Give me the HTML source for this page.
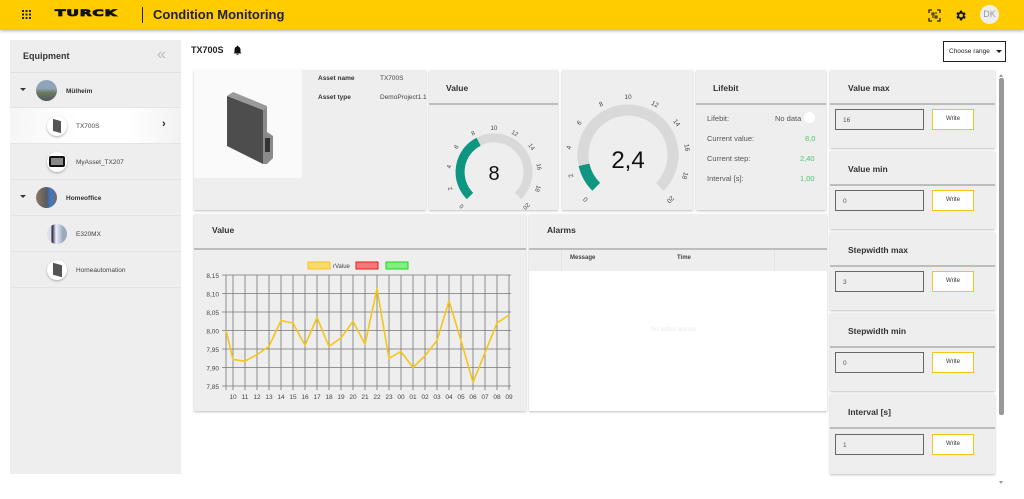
<!DOCTYPE html>
<html><head><meta charset="utf-8"><style>
*{margin:0;padding:0;box-sizing:border-box}
body{width:1024px;height:499px;overflow:hidden;background:#fff;font-family:"Liberation Sans",sans-serif;color:#222;position:relative}
.a{position:absolute}
.card{position:absolute;background:#eeeeee;box-shadow:0 1px 2px rgba(0,0,0,.25)}
.hd{position:absolute;left:0;right:0;top:0;border-bottom:2px solid #bdbdbd}
.t{position:absolute;font-size:8.5px;font-weight:bold;color:#333}
.s{position:absolute;font-size:6.5px;color:#444}
.lb{position:absolute;font-size:7.5px;color:#555}
.inp{position:absolute;border:1px solid #666;background:#eee;font-size:6.5px;color:#555;padding:7px 0 0 7px}
.btn{position:absolute;border:1.5px solid #f5c518;background:#fff;font-size:6px;color:#333;text-align:center;line-height:18px}
.row{position:absolute;left:0;width:171px;height:36px;border-bottom:1px solid #e4e4e4}
.av{position:absolute;width:20px;height:20px;border-radius:50%;top:8px}
.lbl{position:absolute;top:15px;font-size:6.5px;color:#444}
</style></head><body>
<div class="a" style="left:0;top:0;width:1024px;height:30px;background:#ffcc00;box-shadow:0 1px 3px rgba(0,0,0,.3)"></div>
<svg class="a" style="left:22px;top:10px" width="10" height="10"><g fill="#222"><rect x="0" y="0" width="2" height="2"/><rect x="3.5" y="0" width="2" height="2"/><rect x="7" y="0" width="2" height="2"/><rect x="0" y="3.5" width="2" height="2"/><rect x="3.5" y="3.5" width="2" height="2"/><rect x="7" y="3.5" width="2" height="2"/><rect x="0" y="7" width="2" height="2"/><rect x="3.5" y="7" width="2" height="2"/><rect x="7" y="7" width="2" height="2"/></g></svg>
<div class="a" style="left:55px;top:9px;font-size:10px;font-weight:900;letter-spacing:0.5px;color:#111;transform:scale(1.55,0.9);transform-origin:left top;font-family:'DejaVu Sans',sans-serif;-webkit-text-stroke:0.8px #111">TURCK</div>
<div class="a" style="left:142px;top:7px;width:1px;height:16px;background:#222"></div>
<div class="a" style="left:153px;top:7px;font-size:13px;font-weight:bold;color:#222">Condition Monitoring</div>
<svg class="a" style="left:928px;top:9px" width="13" height="13" fill="none" stroke="#222" stroke-width="1.3"><path d="M1 4V1h3M9 1h3v3M12 9v3H9M4 12H1V9"/><path d="M4 4h2v2H4zM7 7h2v2H7zM7 4h2M4 8h2" stroke-width="1"/></svg>
<svg class="a" style="left:954px;top:9px" width="13" height="13" viewBox="0 0 24 24"><path fill="#111" d="M19.4 13a7.5 7.5 0 000-2l2.1-1.6-2-3.5-2.5 1a7 7 0 00-1.7-1L15 3h-4l-.4 2.7a7 7 0 00-1.700 1l-2.5-1-2 3.5L6.5 11a7.5 7.5 0 000 2l-2.1 1.6 2 3.5 2.5-1c.5.4 1.1.8 1.7 1L11 21h4l.4-2.7c.6-.3 1.2-.6 1.7-1l2.5 1 2-3.5zM13 15.5a3.5 3.5 0 110-7 3.5 3.5 0 010 7z"/></svg>
<div class="a" style="left:980px;top:5px;width:19px;height:19px;border-radius:50%;background:#eee;font-size:9px;color:#999;text-align:center;line-height:19px">DK</div>

<div class="a" style="left:10px;top:40px;width:171px;height:434px;background:#eeeeee">
 <div class="a" style="left:13px;top:11px;font-size:9px;font-weight:bold;color:#333">Equipment</div>
 <div class="a" style="left:147px;top:6px;font-size:16px;color:#bbb">«</div>
 <div class="row" style="top:32px;border-top:1px solid #e0e0e0"><div class="a" style="left:10px;top:15px;border:3px solid transparent;border-top:3.5px solid #333"></div><div class="av" style="left:26px;top:7px;width:21px;height:21px;background:linear-gradient(#8fa4b8 40%,#6a7a5a 60%,#556)"></div><div class="lbl" style="left:56px;font-weight:bold;color:#333">Mülheim</div></div>
 <div class="row" style="top:68px;background:linear-gradient(90deg,#f6f6f6,#fff 40%,#fff 70%,#f2f2f2)"><div class="av" style="left:37px;background:#fff;box-shadow:0 1px 2px rgba(0,0,0,.3)"><div class="a" style="left:6px;top:4px;width:8px;height:12px;background:#555;transform:skewY(15deg)"></div></div><div class="lbl" style="left:66px">TX700S</div><div class="a" style="left:152px;top:10px;font-size:11px;font-weight:bold">›</div></div>
 <div class="row" style="top:104px"><div class="av" style="left:37px;background:#fff;box-shadow:0 1px 2px rgba(0,0,0,.3)"><div class="a" style="left:2px;top:4px;width:16px;height:11px;background:#111;border-radius:2px"><div class="a" style="left:2px;top:2px;width:12px;height:7px;background:#888"></div></div></div><div class="lbl" style="left:66px">MyAsset_TX207</div></div>
 <div class="row" style="top:140px"><div class="a" style="left:10px;top:15px;border:3px solid transparent;border-top:3.5px solid #333"></div><div class="av" style="left:26px;top:7px;width:21px;height:21px;background:linear-gradient(90deg,#8a7a6a,#5a5a5a 50%,#3a7ad0 70%,#7a6a5a)"></div><div class="lbl" style="left:56px;font-weight:bold;color:#333">Homeoffice</div></div>
 <div class="row" style="top:176px"><div class="av" style="left:37px;background:linear-gradient(90deg,#dde 20%,#223 25%,#eef 45%,#9ab 80%)"></div><div class="lbl" style="left:66px">E320MX</div></div>
 <div class="row" style="top:212px"><div class="av" style="left:37px;background:#fff;box-shadow:0 1px 2px rgba(0,0,0,.3)"><div class="a" style="left:6px;top:4px;width:9px;height:12px;background:#555;transform:skewY(15deg)"></div></div><div class="lbl" style="left:66px">Homeautomation</div></div>
</div>

<div class="a" style="left:191px;top:45px;font-size:9px;font-weight:bold">TX700S</div>
<svg class="a" style="left:233px;top:45px" width="9" height="10" viewBox="0 0 24 26"><path fill="#111" d="M12 26a3 3 0 003-3H9a3 3 0 003 3zm8-7V12c0-4-2-7-6-8V3a2 2 0 00-4 0v1c-4 1-6 4-6 8v7l-2 2v1h20v-1z"/></svg>
<div class="a" style="left:943px;top:41px;width:63px;height:21px;border:1px solid #222;background:#fff;font-size:6.5px;padding:6px 0 0 5px">Choose range</div>
<div class="a" style="left:996px;top:50px;border:3px solid transparent;border-top:3.5px solid #222"></div>

<div class="card" style="left:194px;top:70px;width:232px;height:140px">
 <div class="a" style="left:0;top:0;width:108px;height:108px;background:#fafafa"></div>
 <svg class="a" style="left:25px;top:18px" width="60" height="80">
  <path d="M8 8L14 4L48 18L44 22Z" fill="#9a9a9a"/>
  <path d="M8 8L44 22L44 76L8 58Z" fill="#4d4d4d"/>
  <path d="M44 22L48 18L48 44L54 48L54 70L48 76L44 76Z" fill="#8a8a8a"/>
  <rect x="46" y="50" width="5" height="14" fill="#333"/>
 </svg>
 <div class="s" style="left:124px;top:5px;font-weight:bold;color:#333">Asset name</div>
 <div class="s" style="left:186px;top:5px">TX700S</div>
 <div class="s" style="left:124px;top:24px;font-weight:bold;color:#333">Asset type</div>
 <div class="s" style="left:186px;top:24px">DemoProject1.1</div>
</div>
<div class="card" style="left:429px;top:70px;width:129px;height:140px"><div class="hd" style="height:35px"></div><div class="t" style="left:17px;top:13px">Value</div></div>
<div class="card" style="left:562px;top:70px;width:131px;height:140px"></div>
<div class="card" style="left:696px;top:70px;width:130px;height:140px"><div class="hd" style="height:35px"></div><div class="t" style="left:17px;top:13px">Lifebit</div>
 <div class="lb" style="left:11px;top:44px">Lifebit:</div><div class="lb" style="left:79px;top:44px">No data</div><div class="a" style="left:108px;top:42px;width:11px;height:11px;border-radius:50%;background:#fff"></div>
 <div class="lb" style="left:11px;top:64px">Current value:</div><div class="lb" style="left:109px;top:64px;color:#4fc46e">8,0</div>
 <div class="lb" style="left:11px;top:84px">Current step:</div><div class="lb" style="left:104px;top:84px;color:#4fc46e">2,40</div>
 <div class="lb" style="left:11px;top:104px">Interval [s]:</div><div class="lb" style="left:104px;top:104px;color:#4fc46e">1,00</div>
</div>

<div class="card" style="left:830px;top:70px;width:165px;height:78px"><div class="hd" style="height:35px"></div><div class="t" style="left:18px;top:13px">Value max</div><div class="inp" style="left:5px;top:39px;width:89px;height:21px">16</div><div class="btn" style="left:102px;top:39px;width:42px;height:21px">Write</div></div>
<div class="card" style="left:830px;top:151px;width:165px;height:78px"><div class="hd" style="height:35px"></div><div class="t" style="left:18px;top:13px">Value min</div><div class="inp" style="left:5px;top:39px;width:89px;height:21px">0</div><div class="btn" style="left:102px;top:39px;width:42px;height:21px">Write</div></div>
<div class="card" style="left:830px;top:232px;width:165px;height:78px"><div class="hd" style="height:35px"></div><div class="t" style="left:18px;top:13px">Stepwidth max</div><div class="inp" style="left:5px;top:39px;width:89px;height:21px">3</div><div class="btn" style="left:102px;top:39px;width:42px;height:21px">Write</div></div>
<div class="card" style="left:830px;top:313px;width:165px;height:78px"><div class="hd" style="height:35px"></div><div class="t" style="left:18px;top:13px">Stepwidth min</div><div class="inp" style="left:5px;top:39px;width:89px;height:21px">0</div><div class="btn" style="left:102px;top:39px;width:42px;height:21px">Write</div></div>
<div class="card" style="left:830px;top:394px;width:165px;height:80px"><div class="hd" style="height:35px"></div><div class="t" style="left:18px;top:13px">Interval [s]</div><div class="inp" style="left:5px;top:40px;width:89px;height:21px">1</div><div class="btn" style="left:102px;top:40px;width:42px;height:21px">Write</div></div>
<div class="a" style="left:999px;top:78px;width:5px;height:337px;background:#999;border-radius:2px"></div>
<div class="a" style="left:999px;top:72px;border:2px solid transparent;border-bottom:3px solid #999"></div>
<div class="a" style="left:999px;top:481px;border:2px solid transparent;border-top:3px solid #999"></div>

<div class="card" style="left:194px;top:214px;width:332px;height:197px"><div class="hd" style="height:36px"></div><div class="t" style="left:18px;top:11px">Value</div></div>
<div class="card" style="left:529px;top:214px;width:298px;height:197px"><div class="hd" style="height:36px"></div><div class="t" style="left:18px;top:11px">Alarms</div>
 <div class="a" style="left:0;top:36px;width:298px;height:21px;background:#eee"></div>
 <div class="a" style="left:32px;top:36px;width:1px;height:161px;background:#e4e4e4"></div>
 <div class="a" style="left:245px;top:36px;width:1px;height:161px;background:#e4e4e4"></div>
 <div class="s" style="left:41px;top:41px;font-weight:bold;color:#444;font-size:6px">Message</div>
 <div class="s" style="left:148px;top:41px;font-weight:bold;color:#444;font-size:6px">Time</div>
 <div class="a" style="left:0;top:57px;width:298px;height:140px;background:#fff"></div>
 <div class="s" style="left:122px;top:113px;color:#eaeaea;font-size:6px">No active alarms</div>
</div>

<svg class="a" style="left:0;top:0" width="1024" height="499" font-family="Liberation Sans, sans-serif">
 <path d="M470 196A34 34 0 1 1 518 196" fill="none" stroke="#d9d9d9" stroke-width="9"/>
 <path d="M470 196A34 34 0 0 1 478.6 141.7" fill="none" stroke="#0e9680" stroke-width="9"/>
 <text x="494" y="180" font-size="20" text-anchor="middle" fill="#111">8</text>
 <g font-size="6" fill="#444" text-anchor="middle">
  <text transform="translate(463,205) rotate(-135)">0</text><text transform="translate(452,188) rotate(-108)">2</text><text transform="translate(451,167) rotate(-81)">4</text><text transform="translate(458,148) rotate(-54)">6</text><text transform="translate(474,135) rotate(-27)">8</text><text transform="translate(494,130)">10</text><text transform="translate(514,135) rotate(27)">12</text><text transform="translate(530,148) rotate(54)">14</text><text transform="translate(537,167) rotate(81)">16</text><text transform="translate(536,188) rotate(108)">18</text><text transform="translate(525,205) rotate(135)">20</text>
 </g>
 <path d="M596.2 186.8A45 45 0 1 1 659.8 186.8" fill="none" stroke="#d9d9d9" stroke-width="11"/>
 <path d="M596.2 186.8A45 45 0 0 1 584 164.8" fill="none" stroke="#0e9680" stroke-width="11"/>
 <text x="628" y="168" font-size="24" text-anchor="middle" fill="#111">2,4</text>
 <g font-size="6.5" fill="#444" text-anchor="middle">
  <text transform="translate(587,198) rotate(-135)">0</text><text transform="translate(573,175) rotate(-108)">2</text><text transform="translate(571,148) rotate(-81)">4</text><text transform="translate(581,124) rotate(-54)">6</text><text transform="translate(602,106) rotate(-27)">8</text><text transform="translate(628,99)">10</text><text transform="translate(654,106) rotate(27)">12</text><text transform="translate(675,124) rotate(54)">14</text><text transform="translate(685,148) rotate(81)">16</text><text transform="translate(683,175) rotate(108)">18</text><text transform="translate(669,198) rotate(135)">20</text>
 </g>
 <rect x="308" y="262" width="22" height="7" fill="#fbd96a" stroke="#f5c518" stroke-width="1"/>
 <text x="333" y="268" font-size="6" fill="#444">rValue</text>
 <rect x="356" y="262" width="22" height="7" fill="#f47a7a" stroke="#e81c1c" stroke-width="1"/>
 <rect x="386" y="262" width="22" height="7" fill="#7ef07e" stroke="#1cd41c" stroke-width="1"/>
 <g stroke="#777" stroke-width="0.8">
  <path d="M222 275H511M222 293.5H511M222 312H511M222 330.5H511M222 349H511M222 367.5H511M222 386H511"/>
  <path d="M226 275V390M233 275V390M245 275V390M257 275V390M269 275V390M281 275V390M293 275V390M305 275V390M317 275V390M329 275V390M341 275V390M353 275V390M365 275V390M377 275V390M389 275V390M401 275V390M413 275V390M425 275V390M437 275V390M449 275V390M461 275V390M473 275V390M485 275V390M497 275V390M509 275V390"/>
 </g>
 <g font-size="6.5" fill="#444" text-anchor="end">
  <text x="219" y="278">8,15</text><text x="219" y="296.5">8,10</text><text x="219" y="315">8,05</text><text x="219" y="333.5">8,00</text><text x="219" y="352">7,95</text><text x="219" y="370.5">7,90</text><text x="219" y="389">7,85</text>
 </g>
 <g font-size="6.5" fill="#444" text-anchor="middle">
  <text x="233" y="399">10</text><text x="245" y="399">11</text><text x="257" y="399">12</text><text x="269" y="399">13</text><text x="281" y="399">14</text><text x="293" y="399">15</text><text x="305" y="399">16</text><text x="317" y="399">17</text><text x="329" y="399">18</text><text x="341" y="399">19</text><text x="353" y="399">20</text><text x="365" y="399">21</text><text x="377" y="399">22</text><text x="389" y="399">23</text><text x="401" y="399">00</text><text x="413" y="399">01</text><text x="425" y="399">02</text><text x="437" y="399">03</text><text x="449" y="399">04</text><text x="461" y="399">05</text><text x="473" y="399">06</text><text x="485" y="399">07</text><text x="497" y="399">08</text><text x="509" y="399">09</text>
 </g>
 <polyline fill="none" stroke="#f5c518" stroke-width="1.6" stroke-linejoin="round" points="226,330.5 233,359.4 245,361.2 257,354.6 269,346.4 281,320.5 293,323.1 305,345.3 317,317.6 329,346.4 341,337.9 353,321.3 365,344.2 377,288.7 389,358.3 401,351.6 413,367.5 425,355.7 437,340.5 449,300.9 461,340.5 473,382.3 485,352.7 497,323.1 509,315"/>
</svg>
</body></html>
